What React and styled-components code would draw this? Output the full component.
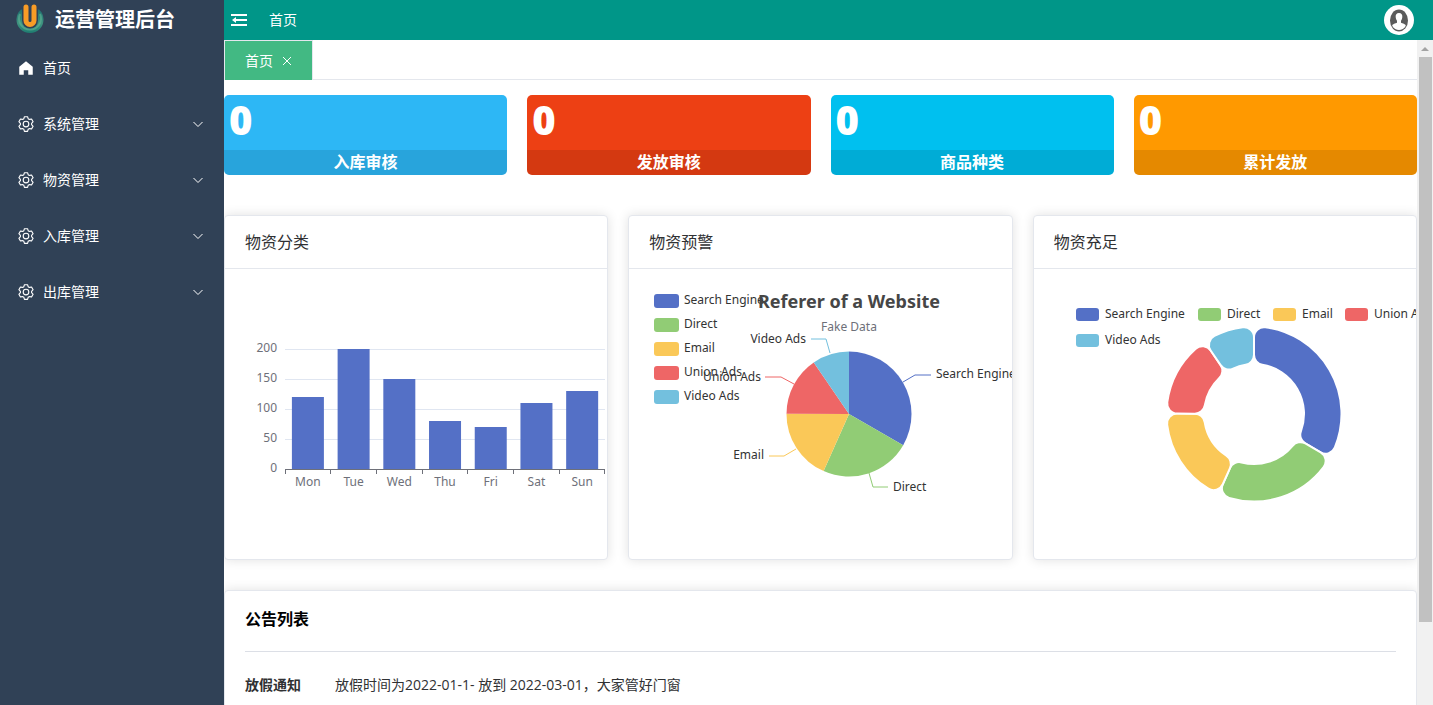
import styled, { createGlobalStyle } from 'styled-components';

const GlobalStyle = createGlobalStyle`
  * {
    box-sizing: border-box;
  }

  body {
    margin: 0;
    overflow: hidden;
    background: #fff;
    color: #303133;
    font-family: "Open Sans", "Noto Sans CJK SC", sans-serif;
    font-size: 14px;
  }

  button {
    border: 0;
    padding: 0;
    background: none;
    color: inherit;
    font: inherit;
    cursor: pointer;
  }
`;

const Layout = styled.div`
  display: flex;
  height: 100vh;
`;

/* sidebar */
const Sidebar = styled.aside`
  flex: 0 0 224px;
  background: #304156;
  color: #fff;
`;

const Brand = styled.div`
  display: flex;
  align-items: center;
  gap: 10px;
  height: 40px;
  padding-left: 15px;

  h1 {
    margin: 0;
    font-size: 20px;
    line-height: 40px;
    font-weight: 700;
  }
`;

const MenuItem = styled.button`
  display: flex;
  align-items: center;
  gap: 8px;
  width: 100%;
  height: 56px;
  padding: 0 20px 0 17px;
  text-align: left;

  span {
    flex: 1;
    padding-bottom: 2px;
  }
`;

/* right side */
const Main = styled.div`
  display: flex;
  flex: 1;
  flex-direction: column;
  min-width: 0;
`;

const Header = styled.header`
  display: flex;
  flex: 0 0 40px;
  align-items: center;
  justify-content: space-between;
  padding: 0 19px 0 7px;
  background: #009688;
  color: #fff;
`;

const HeaderLeft = styled.div`
  display: flex;
  align-items: center;
  gap: 22px;

  a {
    padding-bottom: 2px;
    color: inherit;
    text-decoration: none;
  }
`;

const IconButton = styled.button`
  display: flex;
`;

const Body = styled.div`
  display: flex;
  flex: 1;
  min-height: 0;
`;

const Content = styled.main`
  flex: 1;
  min-width: 0;
  overflow: hidden;
`;

const Tabs = styled.nav`
  display: flex;
  height: 40px;
  margin-bottom: 15px;
  border-bottom: 1px solid #e4e7ed;
`;

const Tab = styled.div`
  display: flex;
  align-items: center;
  gap: 9px;
  height: 40px;
  padding: 0 20px;
  border: 1px solid #e4e7ed;
  border-bottom: 0;
  background: #42b983;
  color: #fff;

  span {
    padding-bottom: 2px;
  }
`;

const Stats = styled.section`
  display: grid;
  grid-template-columns: repeat(4, 1fr);
  gap: 20px;
  margin-bottom: 40px;
`;

const Stat = styled.div`
  border-radius: 5px;
  background: ${(props) => props.$color};
  color: #fff;
  font-weight: 700;

  strong {
    display: block;
    height: 55px;
    padding-left: 5px;
    font-size: 40px;
    line-height: 50px;
  }

  span {
    display: block;
    border-radius: 0 0 5px 5px;
    background: rgba(0, 0, 0, 0.1);
    font-size: 16px;
    line-height: 25px;
    text-align: center;
  }
`;

const Charts = styled.section`
  display: grid;
  grid-template-columns: repeat(3, minmax(0, 1fr));
  gap: 20px;
  margin-bottom: 30px;
`;

const Card = styled.article`
  overflow: hidden;
  border: 1px solid #e4e7ed;
  border-radius: 4px;
  background: #fff;
  box-shadow: 0 0 12px rgba(0, 0, 0, 0.12);
`;

const CardTitle = styled.h2`
  margin: 0;
  padding: 14px 20px;
  border-bottom: 1px solid #e4e7ed;
  font-size: 16px;
  font-weight: 400;
  line-height: 24px;
`;

const CardBody = styled.div`
  padding: 20px;
`;

const Chart = styled.svg`
  display: block;
  width: 400px;
  height: 250px;
  fill: #333;
  font-family: "Noto Sans", sans-serif;
  font-size: 12px;
`;

const NoticeTitle = styled.h2`
  margin: 0;
  padding-bottom: 24px;
  border-bottom: 1px solid #dcdfe6;
  color: #000;
  font-size: 16px;
  line-height: 16px;
`;

const Notice = styled.div`
  display: flex;
  padding: 20px 0 60px;
  line-height: 26px;

  strong {
    flex: 0 0 90px;
  }
`;

/* scroll rail */
const Rail = styled.div`
  flex: 0 0 16px;
  background: #f1f1f1;
`;

const RailArrow = styled.div`
  display: flex;
  align-items: center;
  justify-content: center;
  height: 17px;
`;

const RailThumb = styled.div`
  width: 13px;
  height: 85%;
  margin-left: 2px;
  background: #c1c1c1;
`;

const COLORS = ['#5470c6', '#91cc75', '#fac858', '#ee6666', '#73c0de'];
const SOURCES = ['Search Engine', 'Direct', 'Email', 'Union Ads', 'Video Ads'];
const VALUES = [1048, 735, 580, 484, 300];
const MENU = ['系统管理', '物资管理', '入库管理', '出库管理'];
const STATS = [
  ['入库审核', '#2db7f5'],
  ['发放审核', '#ed4014'],
  ['商品种类', '#00c0ef'],
  ['累计发放', '#ff9900'],
];
const WEEK = [
  ['Mon', 120],
  ['Tue', 200],
  ['Wed', 150],
  ['Thu', 80],
  ['Fri', 70],
  ['Sat', 110],
  ['Sun', 130],
];

const total = VALUES.reduce((a, b) => a + b, 0);
let sum = 0;
const SLICES = VALUES.map((value) => {
  const start = (sum / total) * Math.PI * 2;
  sum += value;
  return [start, (sum / total) * Math.PI * 2];
});

const at = (cx, cy, r, angle) =>
  `${(cx + r * Math.sin(angle)).toFixed(2)} ${(cy - r * Math.cos(angle)).toFixed(2)}`;

const wedge = (cx, cy, r, [a, b]) =>
  `M${cx} ${cy}L${at(cx, cy, r, a)}A${r} ${r} 0 ${b - a > Math.PI ? 1 : 0} 1 ${at(cx, cy, r, b)}Z`;

// ring sector with rounded corners of radius c
const sector = (cx, cy, inner, outer, c, [a, b]) => {
  const oa = Math.asin(c / (outer - c));
  const ia = Math.asin(c / (inner + c));
  const ol = Math.sqrt((outer - c) ** 2 - c * c);
  const il = Math.sqrt((inner + c) ** 2 - c * c);
  return [
    `M${at(cx, cy, il, a)}L${at(cx, cy, ol, a)}`,
    `A${c} ${c} 0 0 1 ${at(cx, cy, outer, a + oa)}`,
    `A${outer} ${outer} 0 0 1 ${at(cx, cy, outer, b - oa)}`,
    `A${c} ${c} 0 0 1 ${at(cx, cy, ol, b)}`,
    `L${at(cx, cy, il, b)}`,
    `A${c} ${c} 0 0 1 ${at(cx, cy, inner, b - ia)}`,
    `A${inner} ${inner} 0 0 0 ${at(cx, cy, inner, a + ia)}`,
    `A${c} ${c} 0 0 1 ${at(cx, cy, il, a)}Z`,
  ].join('');
};

const Logo = () => (
  <svg width="30" height="36" viewBox="0 0 30 36" fill="none">
    <defs>
      <linearGradient id="bowl" x1="0" y1="0" x2="0" y2="1">
        <stop offset="0" stopColor="#1f6f70" />
        <stop offset="0.6" stopColor="#3f9480" />
        <stop offset="1" stopColor="#1d7c70" />
      </linearGradient>
    </defs>
    <path d="M6 7.500A13.500 13.500 0 1 0 24 7.500z" fill="url(#bowl)" />
    <path d="M5 12A11 11 0 1 0 25 12" stroke="#62b294" strokeOpacity="0.6" strokeWidth="2" />
    <path d="M7 5v13.500a8 8 0 0 0 16 0V5z" fill="#304156" />
    <path d="M11 5v13.500a4 4 0 0 0 8 0V5" stroke="#f89c26" strokeWidth="5" strokeLinecap="round" />
    <path d="M15 5v12" stroke="#304156" strokeWidth="2" />
  </svg>
);

const HomeIcon = () => (
  <svg width="18" height="18" viewBox="0 0 1024 1024" fill="#fff">
    <path d="M512 128L128 447.936V896h255.936V640H640v256h255.936V447.936z" />
  </svg>
);

const GearIcon = () => (
  <svg width="18" height="18" viewBox="0 0 1024 1024" fill="#fff">
    <path d="M600.704 64a32 32 0 0 1 30.464 22.208l35.2 109.376c14.784 7.232 28.928 15.36 42.432 24.512l112.384-24.192a32 32 0 0 1 34.432 15.36L944.32 364.8a32 32 0 0 1-4.032 37.504l-77.12 85.12a357.12 357.12 0 0 1 0 49.024l77.12 85.248a32 32 0 0 1 4.032 37.504l-88.704 153.6a32 32 0 0 1-34.432 15.296L708.8 803.904c-13.44 9.088-27.648 17.28-42.368 24.512l-35.264 109.376A32 32 0 0 1 600.704 960H423.296a32 32 0 0 1-30.464-22.208L357.696 828.48a351.616 351.616 0 0 1-42.56-24.64l-112.32 24.256a32 32 0 0 1-34.432-15.36L79.68 659.2a32 32 0 0 1 4.032-37.504l77.12-85.248a357.12 357.12 0 0 1 0-48.896l-77.12-85.248A32 32 0 0 1 79.68 364.8l88.704-153.6a32 32 0 0 1 34.432-15.296l112.32 24.256c13.568-9.152 27.776-17.408 42.56-24.64l35.2-109.312A32 32 0 0 1 423.232 64H600.64zm-23.424 64H446.72l-36.352 113.088-24.512 11.968a294.113 294.113 0 0 0-34.816 20.096l-22.656 15.36-116.224-25.088-65.28 113.152 79.68 88.192-1.92 27.136a293.12 293.12 0 0 0 0 40.192l1.92 27.136-79.808 88.192 65.344 113.152 116.224-25.024 22.656 15.296a294.113 294.113 0 0 0 34.816 20.096l24.512 11.968L446.72 896h130.688l36.48-113.152 24.448-11.904a288.282 288.282 0 0 0 34.752-20.096l22.592-15.296 116.288 25.024 65.28-113.152-79.744-88.192 1.92-27.136a293.12 293.12 0 0 0 0-40.256l-1.92-27.136 79.808-88.128-65.344-113.152-116.288 24.96-22.592-15.232a287.616 287.616 0 0 0-34.752-20.096l-24.448-11.904L577.344 128zM512 320a192 192 0 1 1 0 384 192 192 0 0 1 0-384zm0 64a128 128 0 1 0 0 256 128 128 0 0 0 0-256z" />
  </svg>
);

const Chevron = () => (
  <svg width="12" height="12" viewBox="0 0 12 12" fill="none" stroke="#fff">
    <path d="M1.500 4L6 8.500 10.500 4" />
  </svg>
);

const FoldIcon = () => (
  <svg width="16" height="16" viewBox="0 0 16 16" fill="#fff">
    <path d="M0 2h16v2H0zM7 7h9v2H7zM0 12h16v2H0zM5 5v6L1 8z" />
    <path d="M5 7h3v2H5z" />
  </svg>
);

const Avatar = () => (
  <svg width="30" height="30" viewBox="0 0 30 30">
    <circle cx="15" cy="15" r="15" fill="#fff" />
    <ellipse cx="15" cy="15.500" rx="9" ry="11" fill="#5b5b5b" />
    <path
      d="M15 8c2.500 0 3.600 1.800 3.300 4.300-.2 1.500-.6 2.500-1.300 3.500v2c1.500.8 4.500 1 4.800 3-1.500 3-4.300 4.200-6.800 4.200s-5.300-1.200-6.800-4.200c.3-2 3.300-2.200 4.800-3v-2c-.7-1-1.100-2-1.300-3.500C11.400 9.800 12.500 8 15 8z"
      fill="#fff"
    />
  </svg>
);

const BarChart = () => (
  <Chart>
    {[0, 50, 100, 150, 200].map((tick) => (
      <g key={tick}>
        <path d={`M40 ${180.5 - tick * 0.6}h320`} stroke={tick ? '#e0e6f1' : '#6e7079'} />
        <text x="32" y={183 - tick * 0.6} textAnchor="end" fill="#6e7079">{tick}</text>
      </g>
    ))}
    {WEEK.map(([day, value], i) => (
      <g key={day}>
        <rect x={46.9 + i * 45.71} y={180 - value * 0.6} width="32" height={value * 0.6} fill="#5470c6" />
        <text x={62.9 + i * 45.71} y="197" textAnchor="middle" fill="#6e7079">{day}</text>
      </g>
    ))}
    {[0, 1, 2, 3, 4, 5, 6, 7].map((i) => (
      <path key={i} d={`M${Math.floor(40 + i * 45.71) + 0.5} 180v5`} stroke="#6e7079" />
    ))}
  </Chart>
);

// leader line, label x, label y, anchor
const PIE_LABELS = [
  ['M254 93L266 86H282', 287, 89, 'start'],
  ['M220 184L224 198H239', 244, 202, 'start'],
  ['M147 160L135 167H120', 115, 170, 'end'],
  ['M145 95L132 88H116', 112, 92, 'end'],
  ['M181 64L177 50H162', 157, 54, 'end'],
];

const PieChart = () => (
  <Chart>
    {SOURCES.map((name, i) => (
      <g key={name}>
        <rect x="5" y={5 + i * 24} width="25" height="14" rx="3" fill={COLORS[i]} />
        <text x="35" y={15 + i * 24}>{name}</text>
        <path d={wedge(200, 125, 62.5, SLICES[i])} fill={COLORS[i]} />
        <path d={PIE_LABELS[i][0]} fill="none" stroke={COLORS[i]} />
        <text x={PIE_LABELS[i][1]} y={PIE_LABELS[i][2]} textAnchor={PIE_LABELS[i][3]}>{name}</text>
      </g>
    ))}
    <text x="200" y="19" textAnchor="middle" fontSize="18" fontWeight="700" fill="#464646">Referer of a Website</text>
    <text x="200" y="42" textAnchor="middle" fill="#6e7079">Fake Data</text>
  </Chart>
);

const RING_LEGEND = [[22, 19], [144, 19], [219, 19], [291, 19], [22, 45]];

const RingChart = () => (
  <Chart>
    {SOURCES.map((name, i) => (
      <g key={name}>
        <rect x={RING_LEGEND[i][0]} y={RING_LEGEND[i][1]} width="23" height="13" rx="3" fill={COLORS[i]} />
        <text x={RING_LEGEND[i][0] + 29} y={RING_LEGEND[i][1] + 10}>{name}</text>
        <path
          d={sector(200, 125, 50, 87.5, 10, SLICES[i])}
          fill={COLORS[i]}
          stroke="#fff"
          strokeWidth="2"
        />
      </g>
    ))}
  </Chart>
);

const CHARTS = [
  ['物资分类', BarChart],
  ['物资预警', PieChart],
  ['物资充足', RingChart],
];

const App = () => {
  return (
    <Layout lang="zh-CN">
      <GlobalStyle />
      <Sidebar>
        <Brand>
          <Logo />
          <h1>运营管理后台</h1>
        </Brand>
        <MenuItem>
          <HomeIcon />
          <span>首页</span>
        </MenuItem>
        {MENU.map((name) => (
          <MenuItem key={name}>
            <GearIcon />
            <span>{name}</span>
            <Chevron />
          </MenuItem>
        ))}
      </Sidebar>
      <Main>
        <Header>
          <HeaderLeft>
            <IconButton aria-label="折叠菜单">
              <FoldIcon />
            </IconButton>
            <a href="#home">首页</a>
          </HeaderLeft>
          <IconButton aria-label="用户">
            <Avatar />
          </IconButton>
        </Header>
        <Body>
          <Content>
            <Tabs>
              <Tab>
                <span>首页</span>
                <IconButton aria-label="关闭">
                  <svg width="10" height="10" viewBox="0 0 10 10" stroke="#fff">
                    <path d="M1 1l8 8M9 1L1 9" />
                  </svg>
                </IconButton>
              </Tab>
            </Tabs>
            <Stats>
              {STATS.map(([name, color]) => (
                <Stat key={name} $color={color}>
                  <strong>0</strong>
                  <span>{name}</span>
                </Stat>
              ))}
            </Stats>
            <Charts>
              {CHARTS.map(([name, Graph]) => (
                <Card key={name}>
                  <CardTitle>{name}</CardTitle>
                  <CardBody>
                    <Graph />
                  </CardBody>
                </Card>
              ))}
            </Charts>
            <Card>
              <CardBody>
                <NoticeTitle>公告列表</NoticeTitle>
                <Notice>
                  <strong>放假通知</strong>
                  <span>放假时间为2022-01-1- 放到 2022-03-01，大家管好门窗</span>
                </Notice>
              </CardBody>
            </Card>
          </Content>
          <Rail>
            <RailArrow>
              <svg width="8" height="4" viewBox="0 0 8 4" fill="#a3a3a3">
                <path d="M4 0l4 4H0z" />
              </svg>
            </RailArrow>
            <RailThumb />
          </Rail>
        </Body>
      </Main>
    </Layout>
  );
};

export default App;
